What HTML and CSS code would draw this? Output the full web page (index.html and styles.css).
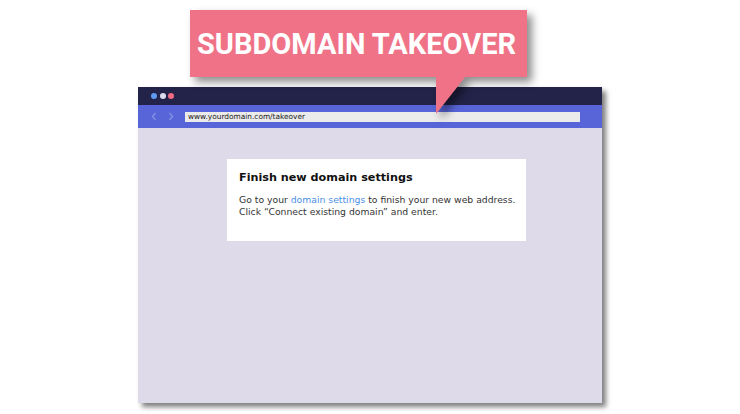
FILE: index.html
```html
<!DOCTYPE html>
<html>
<head>
<meta charset="utf-8">
<link rel="stylesheet" href="styles.css">
</head>
<body>
<div class="stage">
  <div class="bubble">
    <span class="bubble-text">SUBDOMAIN TAKEOVER</span>
  </div>
  <div class="browser">
    <div class="titlebar">
      <span class="dot dot-blue"></span>
      <span class="dot dot-gray"></span>
      <span class="dot dot-pink"></span>
    </div>
    <div class="toolbar">
      <svg class="nav" width="6" height="9" viewBox="0 0 6 9"><path d="M4.5 1 L1.5 4.5 L4.5 8" fill="none" stroke="#8490e6" stroke-width="1.4"/></svg>
      <svg class="nav" width="6" height="9" viewBox="0 0 6 9"><path d="M1.5 1 L4.5 4.5 L1.5 8" fill="none" stroke="#8490e6" stroke-width="1.4"/></svg>
      <div class="address">www.yourdomain.com/takeover</div>
    </div>
    <div class="content">
      <div class="card">
        <h1 class="card-title">Finish new domain settings</h1>
        <p class="card-body">Go to your <span class="link">domain settings</span> to finish your new web address.<br>Click “Connect existing domain” and enter.</p>
      </div>
    </div>
  </div>
</div>
</body>
</html>
```
FILE: styles.css
```css
html, body {
  margin: 0;
  padding: 0;
  background: #ffffff;
}
.stage {
  width: 740px;
  height: 414px;
  overflow: hidden;
  display: flex;
  flex-direction: column;
}
.bubble {
  position: relative;
  z-index: 2;
  margin: 10px 0 0 190px;
  width: 337px;
  height: 67px;
  background: #f07287;
  display: flex;
  align-items: center;
  justify-content: center;
  filter: drop-shadow(5px 5px 4px rgba(0,0,0,0.45));
}
.bubble::after {
  content: "";
  position: absolute;
  left: 246px;
  top: 66px;
  width: 0;
  height: 0;
  border-left: 0 solid transparent;
  border-right: 30px solid transparent;
  border-top: 38px solid #f07287;
}
.bubble-text {
  font-family: Roboto, sans-serif;
  font-weight: 700;
  font-size: 29px;
  letter-spacing: 0;
  color: #ffffff;
  line-height: 1;
  white-space: nowrap;
  margin-left: -4px;
  margin-top: 2px;
}
.browser {
  position: relative;
  z-index: 1;
  margin: 10px 0 0 138px;
  width: 464px;
  height: 316px;
  display: flex;
  flex-direction: column;
  box-shadow: 4px 4px 5px rgba(0,0,0,0.5);
  background: #dedaea;
}
.titlebar {
  height: 18px;
  background: #23234a;
  display: flex;
  align-items: center;
  gap: 2.5px;
  padding-left: 13px;
}
.dot {
  width: 6px;
  height: 6px;
  border-radius: 50%;
}
.dot-blue { background: #5e9cf2; }
.dot-gray { background: #dcdcec; }
.dot-pink { background: #f06a82; }
.toolbar {
  height: 23px;
  background: #5865d8;
  display: flex;
  align-items: center;
  padding-left: 13px;
}
.nav {
  margin-right: 11px;
}
.nav + .nav {
  margin-right: 11px;
}
.address {
  width: 395px;
  height: 10px;
  background: #ebebeb;
  font-family: "DejaVu Sans", Verdana, sans-serif;
  font-size: 7.4px;
  line-height: 10px;
  color: #222;
  padding-left: 3px;
  box-sizing: border-box;
  margin-top: 1px;
}
.content {
  flex: 1;
  background: #dedaea;
  padding: 31px 0 0 89px;
}
.card {
  width: 299px;
  height: 82px;
  background: #ffffff;
  box-sizing: border-box;
  padding: 12px 0 0 12px;
}
.card-title {
  margin: 0;
  font-family: "DejaVu Sans", Verdana, sans-serif;
  font-weight: 700;
  font-size: 11.2px;
  line-height: 14px;
  color: #111;
}
.card-body {
  margin: 9px 0 0 0;
  font-family: "DejaVu Sans", Verdana, sans-serif;
  font-size: 9.25px;
  line-height: 12px;
  color: #333;
  white-space: nowrap;
}
.link {
  color: #4a8fe8;
}
```
